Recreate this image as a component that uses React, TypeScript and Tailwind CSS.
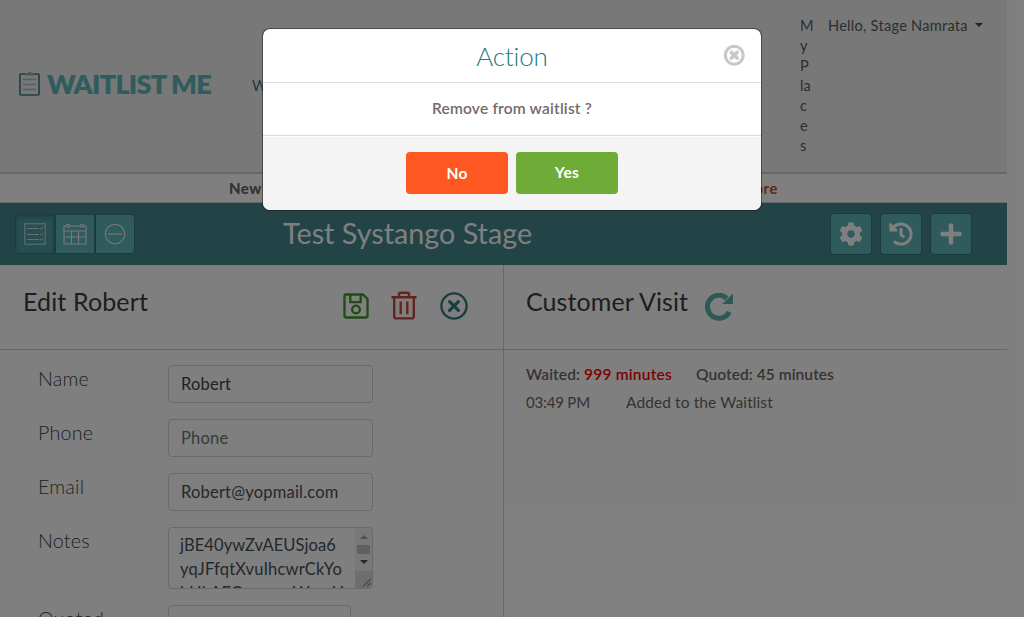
import type { ReactNode } from 'react';
import { FaCog, FaHistory, FaPlus, FaRegTimesCircle } from 'react-icons/fa';

function Logo() {
  return (
    <div className="flex items-center">
      <svg className="h-[26px] w-[22px]" viewBox="0 0 22 26" fill="none">
        <rect x="1" y="3" width="19" height="21" rx="1" stroke="#377b83" strokeWidth="1.6" />
        <path d="M6 4.5V2.5h3a1.8 1.8 0 0 1 3.6 0h3v2z" fill="#aaa" />
        <path d="M4 8.5h13M4 13.500h13M4 18.500h13" stroke="#b5b5b5" strokeWidth="1.300" />
      </svg>
      <span className="ml-[6px] text-[27px] leading-[30px] font-extrabold tracking-[-0.75px] whitespace-nowrap text-[#5eb9b9]">
        WAITLIST ME
      </span>
    </div>
  );
}

function Header() {
  return (
    <header className="flex h-[174px] shrink-0 border-b-2 border-[#cfcfcf] bg-[#f0f0f0] text-[14.6px] leading-5 text-[#5c5c5c]">
      <div className="w-[252px] pt-[69px] pl-[19px]">
        <Logo />
      </div>
      <div className="w-[548px] pt-[76px] text-[#377b83]">Waitlist</div>
      <div className="flex w-[28px] flex-col pt-[16px]">
        {['M', 'y', 'P', 'la', 'c', 'e', 's'].map((part, i) => (
          <span key={i}>{part}</span>
        ))}
      </div>
      <div className="flex items-start gap-[7px] pt-[16px] whitespace-nowrap">
        <span className="tracking-[0.25px]">Hello, Stage Namrata</span>
        <span className="mt-[7px] border-x-4 border-t-4 border-x-transparent border-t-[#444]" />
      </div>
    </header>
  );
}

function ListIcon() {
  return (
    <svg className="size-[22px]" viewBox="0 0 22 22" fill="none" stroke="#d3dede" strokeWidth="1">
      <rect x="0.800" y="0.800" width="20.400" height="20.400" />
      <path d="M3 5.500h12M3 11.500h12M3 16.500h12" strokeWidth="1.200" />
      <path d="M16 5l1.200 1.200L19.500 4M16 11l1.200 1.200 2.300-2.200M16 16l1.200 1.200 2.300-2.200" />
    </svg>
  );
}

function CalendarIcon() {
  return (
    <svg className="h-[22px] w-[24px]" viewBox="0 0 24 22" fill="none" stroke="#f2f2f2" strokeWidth="1.100">
      <path d="M1 3h22v18H1zM1 8h22M1 14h22M8.500 8v13M15.500 8v13" />
      <circle cx="5" cy="2.800" r="1.500" fill="#6fbabf" />
      <circle cx="19" cy="2.800" r="1.500" fill="#6fbabf" />
    </svg>
  );
}

function MinusIcon() {
  return (
    <svg className="size-[22px]" viewBox="0 0 22 22" fill="none" stroke="#f2f2f2">
      <circle cx="11" cy="11" r="9.700" strokeWidth="1.100" />
      <path d="M4 11h14" strokeWidth="1.800" stroke="#cfd8d8" />
    </svg>
  );
}

function ToolButton({ children }: { children: ReactNode }) {
  return (
    <button className="flex h-[42px] w-[42px] items-center justify-center rounded border border-[#35757a] bg-[#60b6bb] text-[24px] text-white">
      {children}
    </button>
  );
}

function TitleBar() {
  return (
    <div className="flex h-[62px] shrink-0 bg-[#46888c]">
      <div className="flex pt-[11px] pl-[15px]">
        <div className="flex h-[40px] w-[40px] items-center justify-center rounded-l border border-[#3a777c] bg-[#4f9da3] shadow-[inset_0_2px_5px_rgba(0,0,0,0.2)]">
          <ListIcon />
        </div>
        <div className="flex h-[40px] w-[40px] items-center justify-center border border-[#3a777c] bg-[#60b6bb]">
          <CalendarIcon />
        </div>
        <div className="flex h-[40px] w-[40px] items-center justify-center rounded-r border border-[#3a777c] bg-[#60b6bb]">
          <MinusIcon />
        </div>
      </div>
      <h1 className="w-[695px] pt-[10px] pl-[148px] text-[28.7px] leading-[40px] tracking-[0.03px] text-white">
        Test Systango Stage
      </h1>
      <div className="flex gap-2 pt-[10px]">
        <ToolButton><FaCog /></ToolButton>
        <ToolButton><FaHistory /></ToolButton>
        <ToolButton><FaPlus /></ToolButton>
      </div>
    </div>
  );
}

function SaveIcon() {
  return (
    <svg className="h-[26px] w-[26px]" viewBox="0 0 26 26" fill="none" stroke="#3e962a" strokeWidth="2.300">
      <path d="M2.800 1.500H20L24.500 6v17.200a1.300 1.300 0 0 1-1.300 1.300H2.800a1.300 1.300 0 0 1-1.300-1.300V2.800a1.300 1.300 0 0 1 1.300-1.300z" />
      <path d="M7.300 2v7.200h10.400V2" />
      <circle cx="13" cy="16.500" r="3.900" />
    </svg>
  );
}

function TrashIcon() {
  return (
    <svg className="h-[29px] w-[26px]" viewBox="0 0 26 29" fill="none" stroke="#c8473c" strokeWidth="2.400">
      <path d="M0.500 6.200h25M8 6V3.400a1.600 1.600 0 0 1 1.600-1.600h6.800A1.600 1.600 0 0 1 18 3.400V6M3.200 6.500v19.200a1.700 1.700 0 0 0 1.700 1.700h16.200a1.700 1.700 0 0 0 1.700-1.700V6.500M9.700 10.500v12.800M16.300 10.500v12.800" />
    </svg>
  );
}

function CancelIcon() {
  return (
    <svg className="size-[28px]" viewBox="0 0 28 28" fill="none" stroke="#377b83">
      <circle cx="14" cy="14" r="12.600" strokeWidth="2.300" />
      <path d="M9.600 9.600l8.800 8.800M18.400 9.600l-8.800 8.800" strokeWidth="3.200" strokeLinecap="round" />
    </svg>
  );
}

function RefreshIcon() {
  return (
    <svg className="size-[28px]" viewBox="0 0 28 28">
      <path d="M24.300 18.800A11.500 11.500 0 1 1 21.800 5.300" fill="none" stroke="#5cb2b2" strokeWidth="5" />
      <path d="M28 0.500V11H17.300z" fill="#5cb2b2" />
    </svg>
  );
}

function Row({ label, children }: { label: string; children: ReactNode }) {
  return (
    <div className="flex items-start pl-[38px]">
      <label className="w-[130px] text-[19.7px] leading-[28px] font-light tracking-[0.2px] text-[#444]">{label}</label>
      {children}
    </div>
  );
}

const field = 'flex h-[38px] w-[205px] items-center rounded border border-[#ced4da] px-[12px] text-[16.5px] leading-6 tracking-[0.2px]';

function Notes() {
  return (
    <div className="flex h-[62px] w-[205px] overflow-hidden rounded border border-[#ced4da] text-[16.5px] leading-6 text-[#495057]">
      <div className="h-[60px] w-[186px] overflow-hidden pt-[5px] pl-[11px] whitespace-nowrap">
        <p className="tracking-[0.1px]">jBE40ywZvAEUSjoa6</p>
        <p className="tracking-[0.18px]">yqJFfqtXvuIhcwrCkYo</p>
        <p className="tracking-[0.1px]">bHkAEQnmoxoWwoHs</p>
      </div>
      <div className="flex w-[17px] flex-col items-center bg-[#f1f1f1]">
        <span className="mt-[7px] border-x-4 border-b-4 border-x-transparent border-b-[#a3a3a3]" />
        <span className="mt-[6px] h-[9px] w-[13px] bg-[#c1c1c1]" />
        <span className="mt-[6px] border-x-4 border-t-4 border-x-transparent border-t-[#505050]" />
        <svg className="mt-[7px] h-[17px] w-[17px] bg-[#dcdcdc]" viewBox="0 0 17 17" stroke="#555" fill="none">
          <path d="M8 15.500L15.500 8M12 15.500l3.500-3.500" />
        </svg>
      </div>
    </div>
  );
}

function EditPanel() {
  return (
    <section className="w-[504px] border-r border-[#cfcfcf]">
      <div className="flex h-[85px] border-b border-[#cfcfcf] pl-[23px]">
        <h2 className="w-[320px] pt-[18px] text-[25px] leading-9 tracking-[0.13px] text-[#413b3d]">Edit Robert</h2>
        <div className="flex h-[81px] items-center">
          <SaveIcon />
          <div className="mr-[23px] ml-[22px]"><TrashIcon /></div>
          <CancelIcon />
        </div>
      </div>
      <div className="flex flex-col gap-4 pt-[15px]">
        <Row label="Name"><div className={`${field} text-[#3e4449]`}>Robert</div></Row>
        <Row label="Phone"><div className={`${field} text-[#6c757d]`}>Phone</div></Row>
        <Row label="Email"><div className={`${field} text-[#495057]`}>Robert@yopmail.com</div></Row>
        <Row label="Notes"><Notes /></Row>
        <Row label="Quoted"><div className="h-[38px] w-[183px] rounded border border-[#ced4da]" /></Row>
      </div>
    </section>
  );
}

function VisitPanel() {
  return (
    <section className="grow">
      <div className="flex h-[85px] border-b border-[#cfcfcf] pl-[22px]">
        <h2 className="w-[179px] pt-[18px] text-[25px] leading-9 tracking-[0.08px] whitespace-nowrap text-[#413b3d]">Customer Visit</h2>
        <div className="pt-[28px]"><RefreshIcon /></div>
      </div>
      <div className="pt-[10px] pl-[22px] text-[15.5px] leading-7 text-[#6f6465]">
        <div className="flex font-semibold">
          <span className="w-[58px] tracking-[0.08px]">Waited:</span>
          <span className="w-[112px] tracking-[0.22px] text-[#ff0000]">999 minutes</span>
          <span className="tracking-[0.07px]">Quoted: 45 minutes</span>
        </div>
        <div className="flex">
          <span className="w-[100px] text-[15px] tracking-[-0.17px]">03:49 PM</span>
          <span className="tracking-[0.1px]">Added to the Waitlist</span>
        </div>
      </div>
    </section>
  );
}

function ActionDialog() {
  return (
    <div className="absolute top-[28px] left-[262px] flex w-[500px] flex-col overflow-hidden rounded-lg border border-black/40 bg-white bg-clip-padding text-center">
      <div className="flex h-[54px] items-center border-b border-[#dcdce2]">
        <h2 className="grow pt-[2px] pl-[48px] text-[26px] font-light tracking-[-0.15px] text-[#24787d]">Action</h2>
        <button className="w-[48px] pl-[11px] text-[20.5px] text-[#c8c8c8]">
          <FaRegTimesCircle className="overflow-visible" stroke="currentColor" strokeWidth={30} />
        </button>
      </div>
      <p className="h-[53px] border-b border-[#dadada] text-[15.5px] leading-[50px] font-semibold tracking-[0.2px] text-[#756a6b]">
        Remove from waitlist ?
      </p>
      <div className="mt-px flex h-[73px] justify-center gap-2 bg-[#f4f4f4] pt-[15px] text-[15.500px] font-bold tracking-[0.300px] text-white">
        <button className="h-[42px] w-[102px] rounded bg-[#ff5722] pt-[2px]">No</button>
        <button className="h-[42px] w-[102px] rounded bg-[#6fab39]">Yes</button>
      </div>
    </div>
  );
}

export default function App() {
  return (
    <div className="relative h-screen w-full overflow-hidden bg-white font-['Lato',sans-serif]">
      <div className="flex h-full w-[1007px] flex-col">
        <Header />
        <div className="flex h-[29px] shrink-0 justify-between border-b border-[#d5d5d5] pr-[229px] pl-[229px] text-[15px] leading-[29px] tracking-[0.5px]">
          <strong className="font-black text-[#6f6465]">New</strong>
          <span className="font-bold text-[#c94a35]">Learn More</span>
        </div>
        <TitleBar />
        <div className="flex grow">
          <EditPanel />
          <VisitPanel />
        </div>
      </div>
      <div className="absolute inset-0 bg-black/50" />
      <ActionDialog />
    </div>
  );
}
